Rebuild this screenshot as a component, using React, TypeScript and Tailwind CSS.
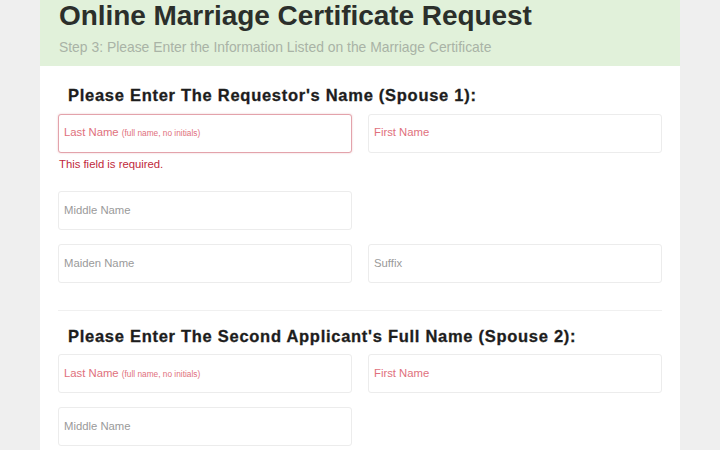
import type { ReactNode } from 'react';

type FieldProps = {
  label: ReactNode;
  tone?: 'required' | 'plain';
  invalid?: boolean;
};

function Field({ label, tone = 'plain', invalid = false }: FieldProps) {
  return (
    <div
      className={`h-[39px] rounded-[3px] border bg-white px-[5px] flex items-center ${
        invalid ? 'border-[#e3a3ab] shadow-[0_0_2px_rgba(200,80,90,0.35)]' : 'border-[#ececec]'
      }`}
    >
      <span
        className={`text-[11.3px] leading-none ${tone === 'required' ? 'text-[#e0707c]' : 'text-[#9a9a9a]'}`}
      >
        {label}
      </span>
    </div>
  );
}

function LastNameLabel() {
  return (
    <>
      Last Name <span className="text-[8.3px]">(full name, no initials)</span>
    </>
  );
}

function SectionTitle({ children }: { children: ReactNode }) {
  return (
    <h2 className="pl-[10px] text-[16.5px] font-bold tracking-[0.72px] text-[#1d1d1d] leading-none [-webkit-text-stroke:0.3px_#1d1d1d]">
      {children}
    </h2>
  );
}

export default function App() {
  return (
    <div className="w-[720px] h-[450px] overflow-hidden bg-[#efefef] font-['Liberation_Sans',Arial,sans-serif]">
      <div className="mx-[40px] h-full bg-white">
        <header className="h-[66px] bg-[#e1f1da] px-[19px] pt-[1px]">
          <h1 className="text-[28px] leading-[30px] font-bold text-[#2b2f2b] tracking-[-0.05px] whitespace-nowrap">
            Online Marriage Certificate Request
          </h1>
          <p className="mt-[10px] text-[13.9px] leading-none text-[#a9b3a6] whitespace-nowrap">
            Step 3: Please Enter the Information Listed on the Marriage Certificate
          </p>
        </header>

        <div className="px-[18px] pt-[21px]">
          <SectionTitle>Please Enter The Requestor's Name (Spouse 1):</SectionTitle>

          <div className="mt-[10px] grid grid-cols-2 gap-x-[16px]">
            <div>
              <Field label={<LastNameLabel />} tone="required" invalid />
              <p className="mt-[6px] pl-px text-[11.3px] leading-none text-[#c0283a]">This field is required.</p>
            </div>
            <Field label="First Name" tone="required" />
          </div>

          <div className="mt-[21px] grid grid-cols-2 gap-x-[16px]">
            <Field label="Middle Name" />
          </div>

          <div className="mt-[14px] grid grid-cols-2 gap-x-[16px]">
            <Field label="Maiden Name" />
            <Field label="Suffix" />
          </div>

          <hr className="mt-[27px] border-t border-[#f0f0f0]" />

          <div className="pt-[17px]">
            <SectionTitle>Please Enter The Second Applicant's Full Name (Spouse 2):</SectionTitle>
          </div>

          <div className="mt-[10px] grid grid-cols-2 gap-x-[16px]">
            <Field label={<LastNameLabel />} tone="required" />
            <Field label="First Name" tone="required" />
          </div>

          <div className="mt-[14px] grid grid-cols-2 gap-x-[16px]">
            <Field label="Middle Name" />
          </div>
        </div>
      </div>
    </div>
  );
}
